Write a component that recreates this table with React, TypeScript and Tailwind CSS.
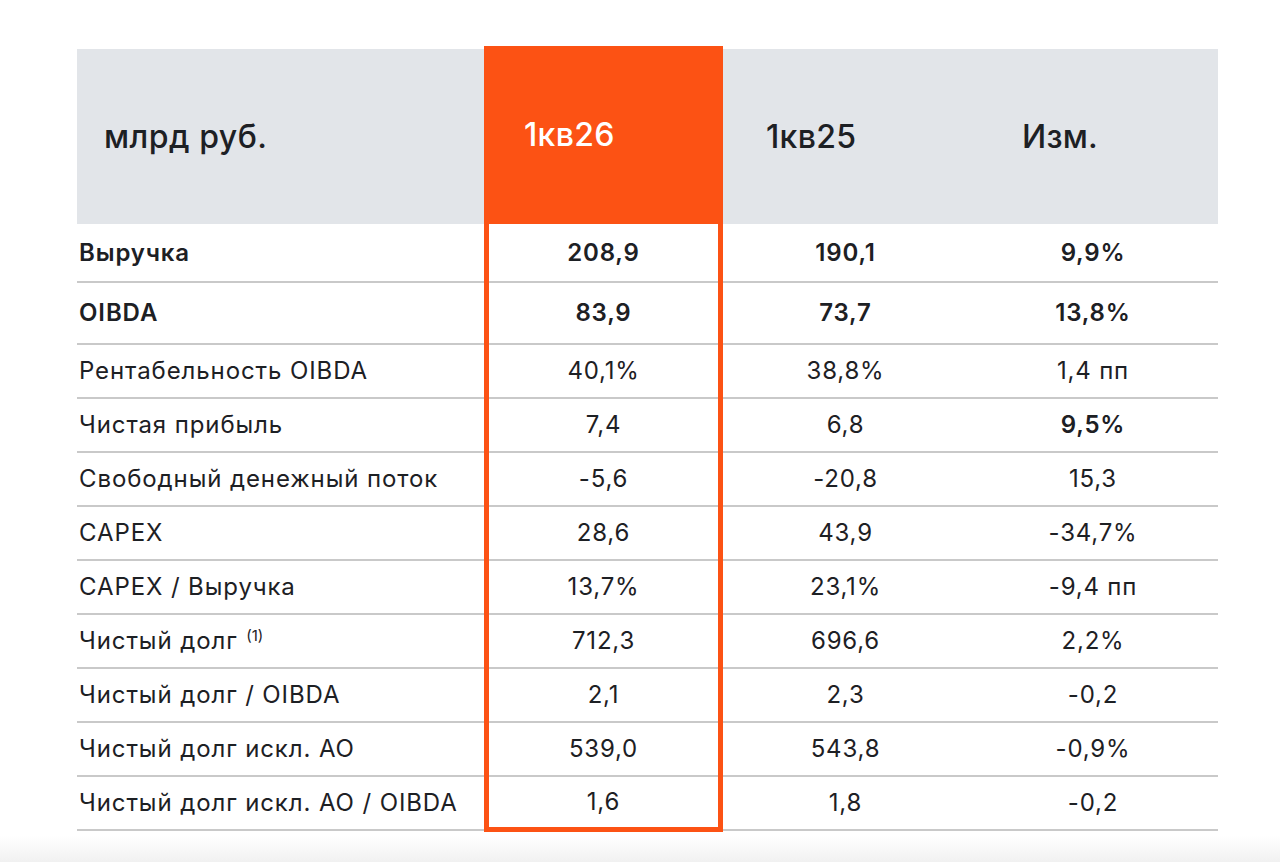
import React from "react";

type Row = {
  label: React.ReactNode;
  a: string;
  b: string;
  c: string;
  boldLabel?: boolean;
  boldA?: boolean;
  boldB?: boolean;
  boldC?: boolean;
  h: string;
};

const rows: Row[] = [
  { label: "Выручка", a: "208,9", b: "190,1", c: "9,9%", boldLabel: true, boldA: true, boldB: true, boldC: true, h: "h-[59px]" },
  { label: "OIBDA", a: "83,9", b: "73,7", c: "13,8%", boldLabel: true, boldA: true, boldB: true, boldC: true, h: "h-[62px]" },
  { label: "Рентабельность OIBDA", a: "40,1%", b: "38,8%", c: "1,4 пп", h: "h-[54px]" },
  { label: "Чистая прибыль", a: "7,4", b: "6,8", c: "9,5%", boldC: true, h: "h-[54px]" },
  { label: "Свободный денежный поток", a: "-5,6", b: "-20,8", c: "15,3", h: "h-[54px]" },
  { label: "CAPEX", a: "28,6", b: "43,9", c: "-34,7%", h: "h-[54px]" },
  { label: "CAPEX / Выручка", a: "13,7%", b: "23,1%", c: "-9,4 пп", h: "h-[54px]" },
  {
    label: (
      <>
        Чистый долг{" "}
        <span className="text-[15px] relative -top-[8px] ml-[1px] tracking-normal">(1)</span>
      </>
    ),
    a: "712,3",
    b: "696,6",
    c: "2,2%",
    h: "h-[54px]",
  },
  { label: "Чистый долг / OIBDA", a: "2,1", b: "2,3", c: "-0,2", h: "h-[54px]" },
  { label: "Чистый долг искл. АО", a: "539,0", b: "543,8", c: "-0,9%", h: "h-[54px]" },
  { label: "Чистый долг искл. АО / OIBDA", a: "1,6", b: "1,8", c: "-0,2", h: "h-[54px]" },
];

const font = { fontFamily: "Inter, 'Noto Sans', sans-serif" };

export default function App() {
  return (
    <div className="w-[1280px] h-[862px] bg-white text-[#1d2024] overflow-hidden relative" style={font}>
      <div className="flex pl-[77px] pt-[46px]">
        {/* label column */}
        <div className="w-[407px] flex flex-col mt-[3px]">
          <div className="h-[175px] bg-[#e2e5e9] flex items-center pl-[27px] text-[32px] font-medium tracking-[0.5px]">
            млрд руб.
          </div>
          {rows.map((r, i) => (
            <div
              key={i}
              className={`${r.h} border-b-2 border-[#c9c9c9] flex items-center pl-[2px] text-[24px] tracking-[0.9px] ${r.boldLabel ? "font-semibold" : "font-normal"}`}
            >
              <span>{r.label}</span>
            </div>
          ))}
        </div>

        {/* highlighted column */}
        <div className="w-[239px] flex flex-col border-x-[5px] border-b-[5px] border-[#fc5214] relative z-10">
          <div className="h-[178px] bg-[#fc5214] -mx-[5px] flex items-center pl-[40px] text-[32px] font-medium tracking-[0.3px] text-white">
            1кв26
          </div>
          {rows.map((r, i) => (
            <div
              key={i}
              className={`${i === rows.length - 1 ? "h-[50px]" : `${r.h} border-b-2 border-[#c9c9c9]`} flex items-center justify-center text-[24px] tracking-[0.8px] ${r.boldA ? "font-semibold" : "font-normal"}`}
            >
              {r.a}
            </div>
          ))}
        </div>

        {/* 1кв25 column */}
        <div className="w-[245px] flex flex-col mt-[3px]">
          <div className="h-[175px] bg-[#e2e5e9] flex items-center pl-[43px] text-[32px] font-medium tracking-[0.3px]">
            1кв25
          </div>
          {rows.map((r, i) => (
            <div
              key={i}
              className={`${r.h} border-b-2 border-[#c9c9c9] flex items-center justify-center text-[24px] tracking-[0.8px] ${r.boldB ? "font-semibold" : "font-normal"}`}
            >
              {r.b}
            </div>
          ))}
        </div>

        {/* Изм. column */}
        <div className="w-[250px] flex flex-col mt-[3px]">
          <div className="h-[175px] bg-[#e2e5e9] flex items-center pl-[54px] text-[32px] font-medium tracking-[0.2px]">
            Изм.
          </div>
          {rows.map((r, i) => (
            <div
              key={i}
              className={`${r.h} border-b-2 border-[#c9c9c9] flex items-center justify-center text-[24px] tracking-[0.8px] ${r.boldC ? "font-semibold" : "font-normal"}`}
            >
              {r.c}
            </div>
          ))}
        </div>
      </div>
      <div className="absolute left-0 right-0 bottom-0 h-[26px] bg-gradient-to-b from-white to-[#f1f1f1]" />
    </div>
  );
}
